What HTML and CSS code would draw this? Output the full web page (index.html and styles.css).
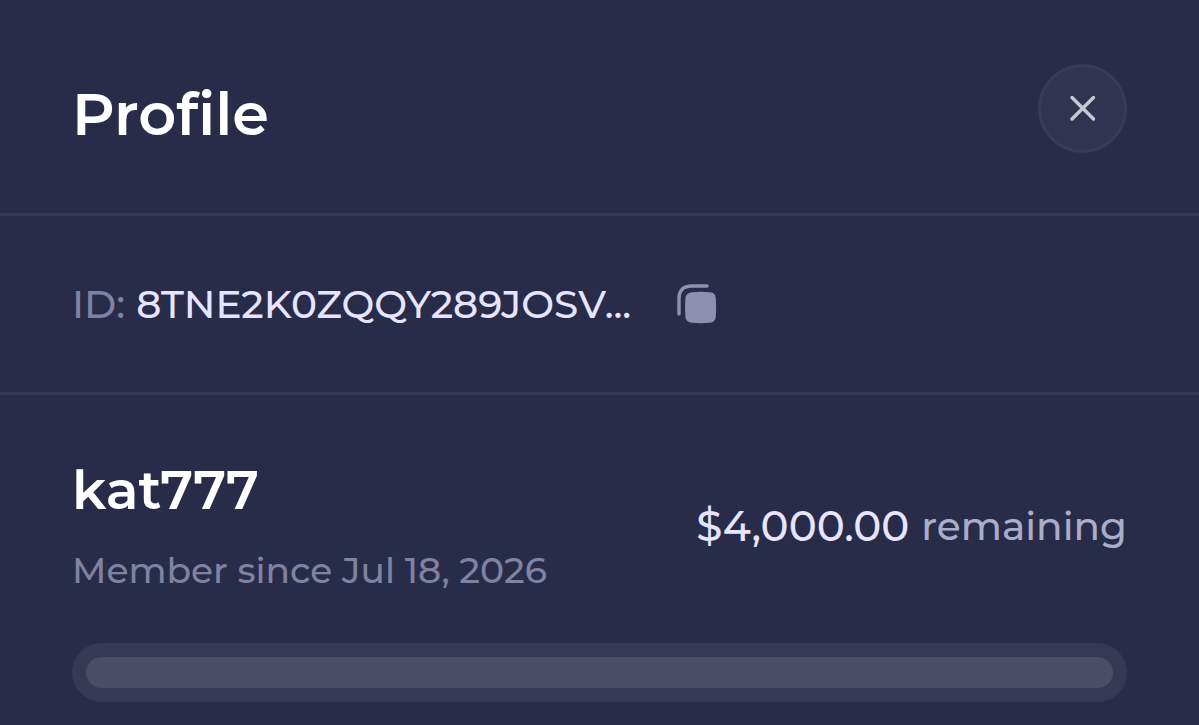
FILE: index.html
```
<!DOCTYPE html>
<html lang="en">
<head>
    <meta charset="UTF-8">
    <meta name="viewport" content="width=device-width, initial-scale=1.0">
    <title>Profile</title>
    <link rel="stylesheet" href="styles.css">
</head>
<body>

    <main class="profile">
        <header class="profile-header">
            <h1 class="title">Profile</h1>
            <button class="close-btn" type="button" aria-label="Close">
                <svg width="28" height="28" viewBox="0 0 28 28" fill="none" stroke="currentColor" stroke-width="3.4" stroke-linecap="round">
                    <path d="M3 2.5L24.5 24M24.5 2.5L3 24"/>
                </svg>
            </button>
        </header>

        <section class="id-row">
            <span class="id-label">ID:</span>
            <span class="id-value">8TNE2K0ZQQY289JOSV...</span>
            <button class="copy-btn" type="button" aria-label="Copy ID">
                <svg width="40" height="40" viewBox="0 0 40 40" fill="none">
                    <path d="M2 30V15Q2 2 15 2H30" stroke="currentColor" stroke-width="3.4" stroke-linecap="round"/>
                    <path d="M15 8.3Q24 7.4 33 8.3Q38.3 8.7 38.8 14Q39.5 23 38.8 33Q38.3 38.3 33 38.8Q24 39.6 15 38.8Q9 38.3 8.4 33Q7.6 23 8.4 14Q9 8.7 15 8.3Z" fill="currentColor"/>
                </svg>
            </button>
        </section>

        <section class="account">
            <div class="account-info">
                <div class="user">
                    <h2 class="username">kat777</h2>
                    <p class="member-since">Member since Jul 18, 2026</p>
                </div>
                <p class="remaining"><span class="amount">$4,000.00</span> <span>remaining</span></p>
            </div>
            <div class="progress">
                <div class="progress-bar"></div>
            </div>
        </section>
    </main>

</body>
</html>
```
FILE: styles.css
```
* {
    box-sizing: border-box;
}

body {
    margin: 0;
    background-color: #282c49;
    color: #ffffff;
    font-family: Montserrat, Inter, sans-serif;
    font-weight: 500;
}

h1, h2, p {
    margin: 0;
}

button {
    display: flex;
    align-items: center;
    justify-content: center;
    padding: 0;
    border: none;
    background: none;
    cursor: pointer;
}

.profile-header {
    display: flex;
    align-items: flex-start;
    justify-content: space-between;
    padding: 64px 72px 54px;
    border-bottom: 3px solid #363955;
}

.title {
    padding-top: 5px;
    font-size: 59px;
    line-height: 90px;
    font-weight: 600;
}

.close-btn {
    width: 89px;
    height: 89px;
    border: 3px solid #383b57;
    border-radius: 50%;
    background-color: #313450;
    color: #c6c8d6;
}

.id-row {
    display: flex;
    align-items: center;
    padding: 66px 72px;
    border-bottom: 3px solid #363955;
    font-size: 39px;
    line-height: 44px;
}

.id-label {
    margin-right: 11px;
    color: #8082a1;
}

.id-value {
    color: #e6e4ff;
}

.copy-btn {
    margin-left: 46px;
    color: #8f8fb0;
}

.account {
    padding: 63px 72px 24px;
}

.account-info {
    display: flex;
    align-items: center;
    justify-content: space-between;
    margin-bottom: 49px;
}

.username {
    font-size: 54px;
    line-height: 64px;
    font-weight: 600;
}

.member-since {
    margin-top: 24px;
    font-size: 36px;
    line-height: 48px;
    color: #8082a1;
}

.remaining {
    display: flex;
    align-items: center;
    gap: 12px;
    font-size: 39px;
    line-height: 48px;
    color: #aaacc8;
}

.amount {
    font-size: 42px;
    color: #e6e4ff;
}

.progress {
    padding: 14px;
    border-radius: 30px;
    background-color: #363953;
}

.progress-bar {
    height: 31px;
    border-radius: 16px;
    background-color: #4b4c66;
}
```
